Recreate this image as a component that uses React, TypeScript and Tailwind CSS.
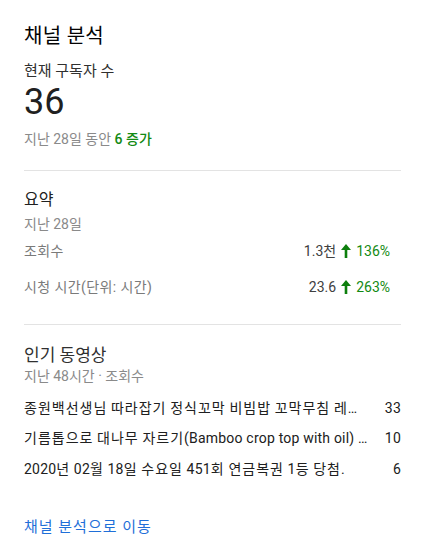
const FONT = "font-['Roboto','Noto_Sans_CJK_KR',sans-serif]";

function UpArrow() {
  return (
    <svg width="10" height="14" viewBox="0 0 10 14" className="mx-[5px] inline-block">
      <path d="M5 0 L10 6 L6.3 6 L6.3 14 L3.7 14 L3.7 6 L0 6 Z" fill="#0d7f0d" />
    </svg>
  );
}

// hangul runs get a bit more letter spacing than latin ones
function Spaced({ text }: { text: string }) {
  return (
    <>
      {text.split(/([\uAC00-\uD7A3]+)/).map((part, i) =>
        /[\uAC00-\uD7A3]/.test(part) ? (
          <span key={i} className="tracking-[1px]">{part}</span>
        ) : (
          part
        )
      )}
    </>
  );
}

const summary = [
  { label: "조회수", value: "1.3천", change: "136%" },
  { label: "시청 시간(단위: 시간)", value: "23.6", change: "263%" },
];

const videos = [
  { title: "종원백선생님 따라잡기 정식꼬막 비빔밥 꼬막무침 레시피 만들기", views: 33 },
  { title: "기름톱으로 대나무 자르기(Bamboo crop top with oil) 대나무 자르는 방법", views: 10 },
  { title: "2020년 02월 18일 수요일 451회 연금복권 1등 당첨.", views: 6 },
];

export default function App() {
  return (
    <div className={`${FONT} w-[427px] h-[547px] bg-white pl-6 pr-[26px] pt-[22px] text-[#202020]`}>
      <h2 className="text-[20px] leading-[28px] tracking-[0.3px] text-[#030303]">채널 분석</h2>

      <div className="mt-[11px] text-[15px] leading-[20px] text-[#303030]">현재 구독자 수</div>
      <div className="text-[36px] leading-[42px] text-[#202020]">36</div>
      <div className="mt-[6px] text-[14px] leading-[20px] text-[#8a8a8a]">
        지난 28일 동안 <span className="font-medium text-[#138a13]">6 증가</span>
      </div>

      <div className="mt-[21px] h-px bg-[#e3e3e3]" />

      <div className="mt-[17px] text-[16px] leading-[24px] text-[#202020]">요약</div>
      <div className="mt-[2px] text-[14px] leading-[20px] text-[#8a8a8a]">지난 28일</div>

      <div className="pr-[11px]">
        {summary.map((row, i) => (
          <div
            key={row.label}
            className={`flex items-center justify-between text-[14px] leading-[20px] ${i === 0 ? "mt-[7px]" : "mt-[16px]"}`}
          >
            <span className="tracking-[0.4px] text-[#7a7a7a]">{row.label}</span>
            <span className="flex items-center">
              <span className="text-[#404040]">{row.value}</span>
              <UpArrow />
              <span className="text-[#138a13]">{row.change}</span>
            </span>
          </div>
        ))}
      </div>

      <div className="mt-[27px] h-px bg-[#e3e3e3]" />

      <div className="mt-[18px] text-[17px] leading-[24px] text-[#303030]">인기 동영상</div>
      <div className="text-[14px] leading-[18px] text-[#8a8a8a]">지난 48시간 · 조회수</div>

      <div className="mt-[8px]">
        {videos.map((v) => (
          <div key={v.title} className="flex h-[30.5px] items-center text-[14px] tracking-[0.2px] text-[#202020]">
            <span className="min-w-0 flex-1 truncate">
              <Spaced text={v.title} />
            </span>
            <span className="w-[32px] shrink-0 text-right">{v.views}</span>
          </div>
        ))}
      </div>

      <div className="mt-[32px] text-[15px] leading-[20px] tracking-[1px] text-[#1f6fd8]">채널 분석으로 이동</div>
    </div>
  );
}
